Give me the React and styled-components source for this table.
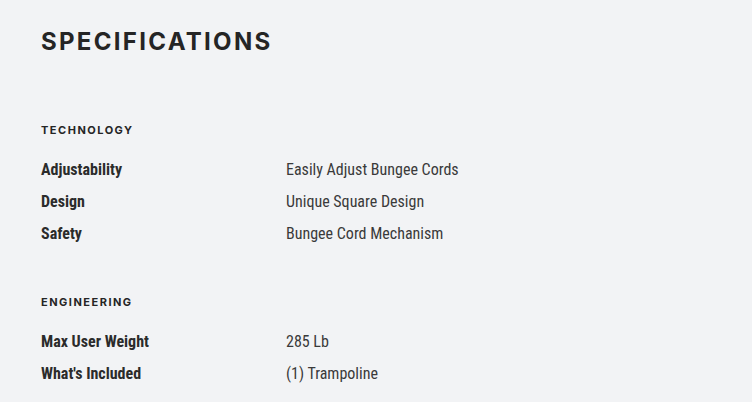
import React from 'react'
import styled, { createGlobalStyle } from 'styled-components'

const GlobalStyle = createGlobalStyle`
  html, body {
    margin: 0;
    background: #f2f3f5;
  }
`

const Wrapper = styled.section`
  padding: 26px 41px 0;
  color: #2b2b2b;
`

const Title = styled.h2`
  margin: 0 0 64px;
  font-family: 'Inter', sans-serif;
  font-weight: 700;
  font-size: 24px;
  line-height: 32px;
  letter-spacing: 2.3px;
  color: #252525;
`

const Group = styled.div`
  & + & {
    margin-top: 45px;
  }
`

const GroupLabel = styled.h3`
  margin: 0 0 15px;
  font-family: 'Inter', sans-serif;
  font-weight: 700;
  font-size: 11px;
  line-height: 16px;
  letter-spacing: 1.5px;
  color: #252525;
`

const Row = styled.div`
  display: grid;
  grid-template-columns: 245px 1fr;
  height: 32px;
  align-items: center;
  font-family: 'Roboto Condensed', 'Liberation Sans Narrow', 'Roboto', sans-serif;
  font-size: 16px;
`

const Name = styled.span`
  font-weight: 700;
  color: #2b2b2b;
`

const Value = styled.span`
  font-weight: 400;
  color: #3a3a3a;
`

const groups = [
  {
    title: 'TECHNOLOGY',
    rows: [
      ['Adjustability', 'Easily Adjust Bungee Cords'],
      ['Design', 'Unique Square Design'],
      ['Safety', 'Bungee Cord Mechanism'],
    ],
  },
  {
    title: 'ENGINEERING',
    rows: [
      ['Max User Weight', '285 Lb'],
      ["What's Included", '(1) Trampoline'],
    ],
  },
]

const App = () => {
  return (
    <>
      <GlobalStyle />
      <Wrapper>
        <Title>SPECIFICATIONS</Title>
        {groups.map((group) => (
          <Group key={group.title}>
            <GroupLabel>{group.title}</GroupLabel>
            {group.rows.map(([name, value]) => (
              <Row key={name}>
                <Name>{name}</Name>
                <Value>{value}</Value>
              </Row>
            ))}
          </Group>
        ))}
      </Wrapper>
    </>
  )
}

export default App
